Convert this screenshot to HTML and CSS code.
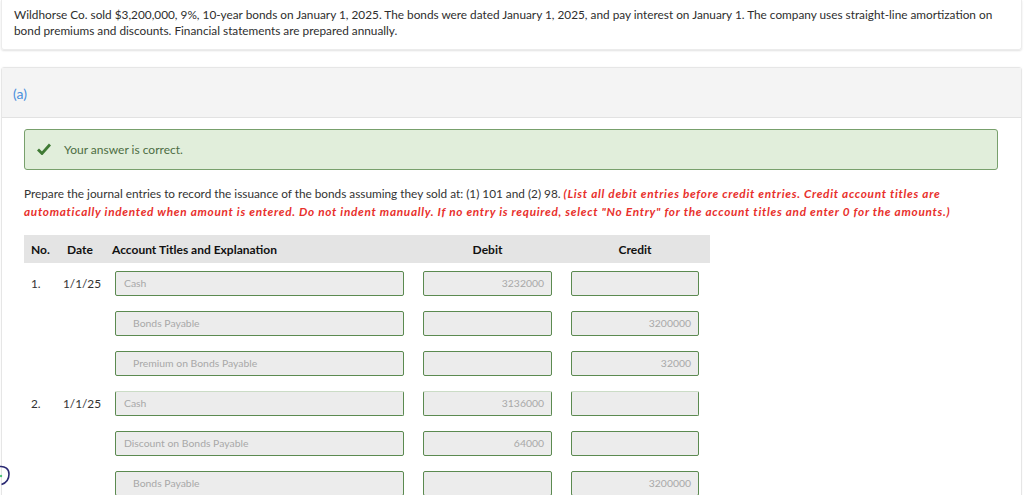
FILE: index.html
```html
<!DOCTYPE html>
<html>
<head>
<meta charset="utf-8">
<link rel="stylesheet" href="styles.css">
</head>
<body>
<div class="page">
  <div class="problem">
    Wildhorse Co. sold $3,200,000, 9%, 10-year bonds on January 1, 2025. The bonds were dated January 1, 2025, and pay interest on January 1. The company uses straight-line amortization on bond premiums and discounts. Financial statements are prepared annually.
  </div>

  <div class="part">
    <div class="part-head">(a)</div>
    <div class="part-body">
      <div class="correct">
        <svg class="check" width="14" height="12" viewBox="0 0 14 12"><path d="M1 6.5 L5 10.5 L13 1.5" fill="none" stroke="#3f7a34" stroke-width="2.8"/></svg>
        <span>Your answer is correct.</span>
      </div>

      <p class="instr">Prepare the journal entries to record the issuance of the bonds assuming they sold at: (1) 101 and (2) 98. <em>(List all debit entries before credit entries. Credit account titles are automatically indented when amount is entered. Do not indent manually. If no entry is required, select "No Entry" for the account titles and enter 0 for the amounts.)</em></p>

      <div class="journal">
        <div class="jhead">
          <div class="c-no">No.</div>
          <div class="c-date">Date</div>
          <div class="c-acct">Account Titles and Explanation</div>
          <div class="c-dr">Debit</div>
          <div class="c-cr">Credit</div>
        </div>

        <div class="jrow">
          <div class="c-no">1.</div>
          <div class="c-date">1/1/25</div>
          <div class="c-acct"><div class="box acct">Cash</div></div>
          <div class="c-dr"><div class="box num">3232000</div></div>
          <div class="c-cr"><div class="box num"></div></div>
        </div>
        <div class="jrow">
          <div class="c-no"></div>
          <div class="c-date"></div>
          <div class="c-acct"><div class="box acct indent">Bonds Payable</div></div>
          <div class="c-dr"><div class="box num"></div></div>
          <div class="c-cr"><div class="box num">3200000</div></div>
        </div>
        <div class="jrow">
          <div class="c-no"></div>
          <div class="c-date"></div>
          <div class="c-acct"><div class="box acct indent">Premium on Bonds Payable</div></div>
          <div class="c-dr"><div class="box num"></div></div>
          <div class="c-cr"><div class="box num">32000</div></div>
        </div>

        <div class="jrow">
          <div class="c-no">2.</div>
          <div class="c-date">1/1/25</div>
          <div class="c-acct"><div class="box acct lighttop">Cash</div></div>
          <div class="c-dr"><div class="box num lighttop">3136000</div></div>
          <div class="c-cr"><div class="box num lighttop"></div></div>
        </div>
        <div class="jrow">
          <div class="c-no"></div>
          <div class="c-date"></div>
          <div class="c-acct"><div class="box acct">Discount on Bonds Payable</div></div>
          <div class="c-dr"><div class="box num">64000</div></div>
          <div class="c-cr"><div class="box num"></div></div>
        </div>
        <div class="jrow">
          <div class="c-no"></div>
          <div class="c-date"></div>
          <div class="c-acct"><div class="box acct indent">Bonds Payable</div></div>
          <div class="c-dr"><div class="box num"></div></div>
          <div class="c-cr"><div class="box num">3200000</div></div>
        </div>
      </div>
    </div>
  </div>

  <svg class="mark" width="14" height="24" viewBox="0 0 14 24"><path d="M0 1.5 C5 1 9 4 9 9 C9 14 6 18 1.5 19.5" fill="none" stroke="#2b2a73" stroke-width="1.6"/><circle cx="1" cy="11" r="1.2" fill="#4cc37a"/></svg>
</div>
</body>
</html>
```

FILE: styles.css
```css
* { box-sizing: border-box; }
html, body { margin: 0; padding: 0; background: #fff; }
body {
  font-family: Lato, "Open Sans", "Liberation Sans", sans-serif;
  color: #2e2e2e;
  width: 1024px;
  height: 495px;
  overflow: hidden;
}
.page { position: relative; padding: 0 2px 0 1px; }

.problem {
  font-size: 11.8px;
  line-height: 16px;
  padding: 7px 12px 11px 12px;
  height: 50px;
  border: 1px solid #ececec;
  border-top: none;
  box-shadow: 0 1px 2px rgba(0,0,0,0.12);
  border-radius: 0 0 3px 3px;
}

.part {
  margin-top: 17px;
  border: 1px solid #e6e6e6;
  border-radius: 3px;
  box-shadow: 0 0 2px rgba(0,0,0,0.06);
}
.part-head {
  background: #f4f4f4;
  height: 50px;
  border-bottom: 1px solid #e2e2e2;
  padding: 17px 0 0 11px;
  font-size: 14px;
  line-height: 18px;
  color: #4a8fdc;
}
.part-body { padding: 11px 22px 0 22px; }

.correct {
  height: 41px;
  width: 974px;
  background: #e1eedb;
  border: 1px solid #78a06c;
  border-radius: 3px;
  display: flex;
  align-items: center;
  padding-left: 12px;
  font-size: 12px;
  color: #4d6d43;
}
.check { margin-right: 13px; margin-top: -1px; }

.instr {
  margin: 15px 0 0 0;
  font-size: 11.8px;
  line-height: 17.5px;
  color: #333;
  width: 960px;
}
.instr em {
  color: #e8302c;
  font-weight: bold;
  font-style: italic;
  letter-spacing: 0.7px;
}

.journal { margin-top: 15px; width: 686px; }
.jhead, .jrow {
  display: grid;
  grid-template-columns: 39px 48px 304px 148px 147px;
}
.jhead {
  background: #e4e4e4;
  height: 28px;
  align-items: center;
  font-weight: bold;
  font-size: 12px;
  color: #111;
}
.jhead .c-no { padding-left: 7px; }
.jhead .c-date { padding-left: 4px; }
.jhead .c-acct { padding-left: 1px; }
.jhead .c-dr { text-align: center; padding-left: 8px; padding-right: 11px; }
.jhead .c-cr { text-align: center; padding-left: 8px; padding-right: 11px; }

.jrow {
  height: 40px;
  padding-top: 8px;
  font-size: 11.8px;
  color: #333;
}
.jrow .c-no { padding-left: 7px; line-height: 25px; }
.jrow .c-date { line-height: 25px; }
.jrow .c-acct { padding-left: 4px; }
.jrow .c-dr { padding-left: 8px; }
.jrow .c-cr { padding-left: 8px; }

.box {
  height: 25px;
  background: #ececec;
  border: 1px solid #5b8a50;
  border-radius: 2px;
  font-size: 10.4px;
  line-height: 23px;
  color: #a8a8a8;
  white-space: nowrap;
}
.box.lighttop { border-top-color: #cbdcc6; }
.acct { width: 289px; padding-left: 8px; }
.acct.indent { padding-left: 17px; }
.c-dr .num { width: 129px; }
.c-cr .num { width: 128px; }
.num { text-align: right; padding-right: 7px; }

.mark { position: absolute; left: 0; top: 465px; }
```
